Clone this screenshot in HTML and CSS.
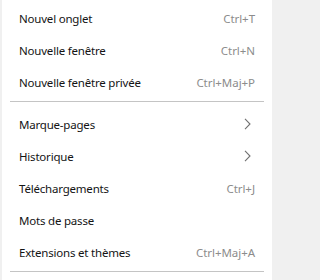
FILE: index.html
```html
<!DOCTYPE html>
<html lang="fr">
<head>
<meta charset="utf-8">
<link rel="stylesheet" href="styles.css">
</head>
<body>
<div class="menu">
  <div class="item"><span class="label">Nouvel onglet</span><span class="key">Ctrl+T</span></div>
  <div class="item"><span class="label">Nouvelle fenêtre</span><span class="key">Ctrl+N</span></div>
  <div class="item"><span class="label">Nouvelle fenêtre privée</span><span class="key">Ctrl+Maj+P</span></div>
  <div class="sep"></div>
  <div class="item"><span class="label">Marque-pages</span><svg class="chev" width="7" height="12" viewBox="0 0 7 12"><path d="M1 0.8 L6 6 L1 11.2" fill="none" stroke="#707070" stroke-width="1.1"/></svg></div>
  <div class="item"><span class="label">Historique</span><svg class="chev" width="7" height="12" viewBox="0 0 7 12"><path d="M1 0.8 L6 6 L1 11.2" fill="none" stroke="#707070" stroke-width="1.1"/></svg></div>
  <div class="item"><span class="label">Téléchargements</span><span class="key">Ctrl+J</span></div>
  <div class="item"><span class="label">Mots de passe</span></div>
  <div class="item"><span class="label">Extensions et thèmes</span><span class="key">Ctrl+Maj+A</span></div>
  <div class="sep"></div>
</div>
</body>
</html>
```

FILE: styles.css
```css
html, body {
  margin: 0;
  padding: 0;
  background: #f0f0f0;
  height: 100%;
}
body {
  font-family: "Noto Sans", "Open Sans", sans-serif;
  font-size: 12px;
}
.menu {
  width: 270px;
  margin: 0 0 0 2px;
  background: #ffffff;
  padding-top: 2px;
  height: calc(100% - 2px);
}
.item {
  height: 32px;
  display: flex;
  align-items: center;
  justify-content: space-between;
  padding: 0 17px 0 17px;
  color: #141414;
}
.label {
  font-size: 11.5px;
  letter-spacing: -0.2px;
}
.key {
  color: #8c8c8c;
  font-size: 11.5px;
  letter-spacing: -0.05px;
}
.chev {
  margin-right: 4px;
  display: block;
}
.sep {
  height: 1px;
  background: #c4c4c4;
  margin: 3px 8px 6px 8px;
}
```
